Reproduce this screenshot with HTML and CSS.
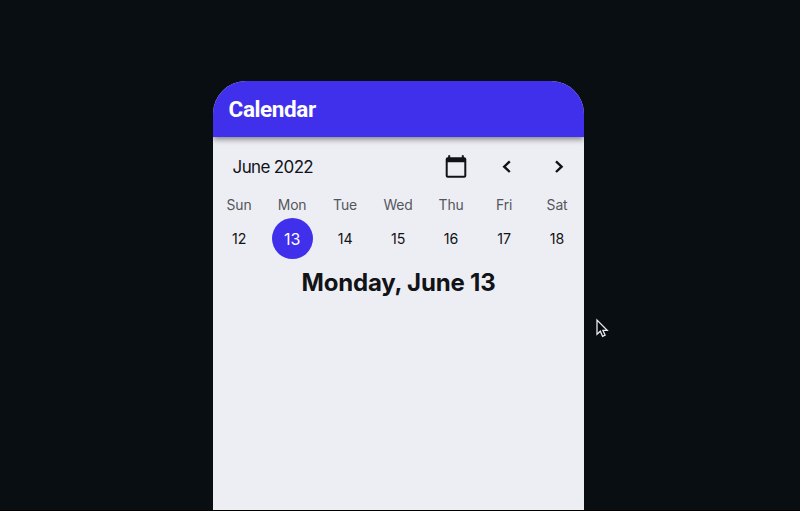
FILE: index.html
```html
<!DOCTYPE html>
<html lang="en">
<head>
<meta charset="utf-8">
<title>Calendar</title>
<link rel="stylesheet" href="styles.css">
</head>
<body>
<main class="phone">
  <header class="appbar"><h1 class="title">Calendar</h1></header>
  <section class="toolbar">
    <span class="month">June 2022</span>
    <svg class="icon-calendar" width="24" height="26" viewBox="0 0 24 26"><path fill="#111216" fill-rule="evenodd" d="M4.2 1.2h2v2h11.6v-2h2v2h.4a2.1 2.1 0 0 1 2.1 2.1v16.4a2.1 2.1 0 0 1-2.1 2.1H3.8a2.1 2.1 0 0 1-2.1-2.1V5.3a2.1 2.1 0 0 1 2.1-2.1h.4zM3.7 8.3v13.5h16.6V8.3z"/></svg>
    <svg class="icon-prev" width="12" height="16" viewBox="0 0 12 16"><path d="M8.8 2.4 3.2 7.7l5.6 5.3"/></svg>
    <svg class="icon-next" width="12" height="16" viewBox="0 0 12 16"><path d="M3 2.4 8.6 7.7 3 13"/></svg>
  </section>
  <section class="week">
    <span class="name">Sun</span><span class="name">Mon</span><span class="name">Tue</span><span class="name">Wed</span><span class="name">Thu</span><span class="name">Fri</span><span class="name">Sat</span>
    <span class="day">12</span><span class="day selected">13</span><span class="day">14</span><span class="day">15</span><span class="day">16</span><span class="day">17</span><span class="day">18</span>
  </section>
  <h2 class="heading"><span>Monday, June 13</span></h2>
</main>
<svg class="cursor" width="14" height="21" viewBox="0 0 14 21"><path d="M2 2v14.3l3.3-3.1 2.3 5.1 2.5-1.1-2.2-4.9h4.3z" fill="#05090c" stroke="#e8eaec" stroke-width="1.3"/></svg>
</body>
</html>
```
FILE: styles.css
```css
* { box-sizing: border-box; }
body {
  margin: 0;
  height: 511px;
  padding-top: 81.4px;
  overflow: hidden;
  background: #080e12;
  border-bottom: 1px solid #000;
  font-family: Inter, "Liberation Sans", sans-serif;
  color: #121317;
}
.phone {
  width: 371.8px;
  height: 428.6px;
  margin-left: 212.6px;
  overflow: hidden;
  background: #edeef4;
  border-radius: 33px 33px 0 0;
}
.appbar {
  height: 55.6px;
  padding-left: 16px;
  background: #4130eb;
  box-shadow: 0 2px 6px rgba(0, 0, 0, .5);
}
.title {
  margin: 0;
  font: 700 22.5px/57px Roboto, sans-serif;
  height: 55px;
  letter-spacing: -.4px;
  color: #fff;
}
.toolbar {
  display: flex;
  align-items: center;
  height: 60px;
  padding: 0 19px 0 20px;
}
.toolbar > * { flex-shrink: 0; }
.month {
  width: 211px;
  font-size: 17px;
  letter-spacing: -.65px;
}
.icon-prev { margin-left: 33.4px; }
.icon-next { margin-left: 40px; }
.icon-prev, .icon-next {
  fill: none;
  stroke: #111216;
  stroke-width: 2.4;
}
.week {
  display: grid;
  grid-template-columns: repeat(7, 53px);
  grid-template-rows: 21.5px 41px;
  align-items: center;
  justify-items: center;
  text-align: center;
}
.name {
  align-self: start;
  font-size: 13.9px;
  line-height: 16px;
  letter-spacing: -.1px;
  color: #55565b;
}
.day {
  font-size: 14.2px;
  line-height: 17px;
}
.selected {
  width: 41px;
  height: 41px;
  border-radius: 50%;
  background: #4130eb;
  color: #fff;
  font-size: 16px;
  line-height: 42px;
}
.heading {
  margin: 8px 0 0;
  font-size: 24px;
  line-height: 32px;
  font-weight: 650;
  letter-spacing: -.2px;
  text-align: center;
}
.cursor {
  position: absolute;
  left: 595px;
  top: 317.5px;
}
```
